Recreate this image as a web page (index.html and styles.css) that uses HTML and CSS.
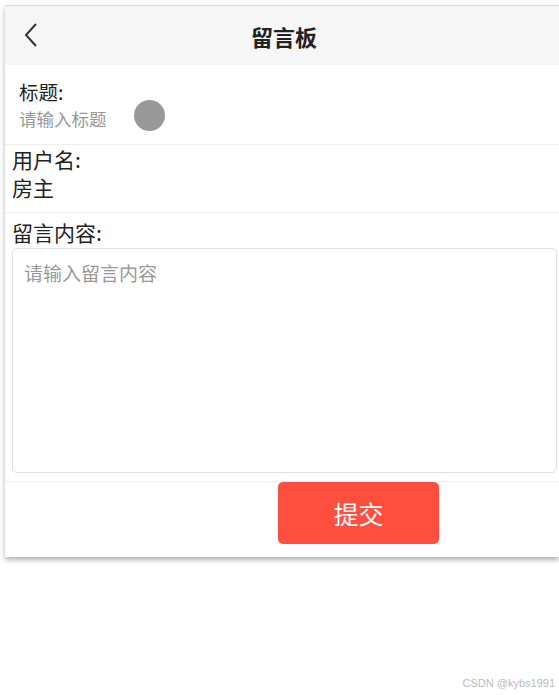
FILE: index.html
```html
<!DOCTYPE html>
<html lang="zh">
<head>
<meta charset="utf-8">
<link rel="stylesheet" href="styles.css">
</head>
<body>
<div class="card">
  <div class="header">
    <svg class="back" width="16" height="26" viewBox="0 0 16 26"><path d="M13 2 L3 13 L13 24" fill="none" stroke="#333" stroke-width="2"/></svg>
    <div class="title">留言板</div>
  </div>
  <div class="row row-title">
    <div class="col">
      <div class="label small">标题:</div>
      <div class="ph small">请输入标题</div>
    </div>
    <div class="dot"></div>
  </div>
  <div class="row row-user">
    <div class="label">用户名:</div>
    <div class="value">房主</div>
  </div>
  <div class="row row-msg">
    <div class="label">留言内容:</div>
    <div class="area"><span class="ph">请输入留言内容</span></div>
  </div>
  <div class="actions">
    <div class="btn">提交</div>
  </div>
</div>
<div class="mark">CSDN @kybs1991</div>
</body>
</html>
```
FILE: styles.css
```css
html, body { margin: 0; padding: 0; background: #fff; }
body {
  font-family: "Noto Sans CJK SC", "Noto Sans", sans-serif;
  color: #222;
  height: 695px;
  position: relative;
  overflow: hidden;
}
.card {
  margin: 5px 0 0 5px;
  background: #fff;
  box-shadow: 0 3px 5px rgba(0,0,0,0.3);
}
.header {
  height: 59px;
  border-top: 1px solid #dcdcdc;
  background: #f6f6f6;
  display: flex;
  align-items: center;
  justify-content: center;
  position: relative;
}
.back { position: absolute; left: 18px; top: 16px; }
.title { font-size: 22px; font-weight: bold; color: #222; line-height: 1; margin-left: 4px; }
.row { border-bottom: 1px solid #eeeeee; box-sizing: border-box; }
.row-title {
  height: 80px;
  display: flex;
  align-items: flex-start;
  padding-left: 14px;
  padding-top: 13px;
}
.col { display: flex; flex-direction: column; }
.label { font-size: 21px; line-height: 28px; color: #222; }
.label.small { font-size: 19.5px; line-height: 28px; }
.ph { color: #999; font-size: 17.5px; }
.ph.small { font-size: 17.5px; line-height: 24px; margin-top: 1px; }
.dot {
  width: 31px; height: 31px; border-radius: 50%;
  background: #999;
  margin-left: 27px; margin-top: 22px;
  filter: blur(0.6px);
}
.row-user { height: 68px; padding: 0 0 0 7px; }
.value { font-size: 21px; line-height: 28px; color: #222; }
.row-msg { height: 269px; padding: 5px 2px 0 7px; }
.area {
  height: 225px;
  border: 1px solid #e0e0e0;
  border-radius: 5px;
  padding: 12px 11px;
  box-sizing: border-box;
  margin-top: 2px;
}
.area .ph { font-size: 19px; line-height: 24px; display: block; }
.actions { height: 75px; display: flex; padding-left: 273px; box-sizing: border-box; }
.btn {
  width: 161px; height: 62px;
  background: #fe4f3e;
  border-radius: 5px;
  color: #fff;
  font-size: 25px;
  display: flex; align-items: center; justify-content: center;
}
.mark {
  position: absolute; right: 4px; bottom: 6px;
  font-family: "Liberation Sans", sans-serif;
  font-size: 11px; color: #bbb;
}
```
